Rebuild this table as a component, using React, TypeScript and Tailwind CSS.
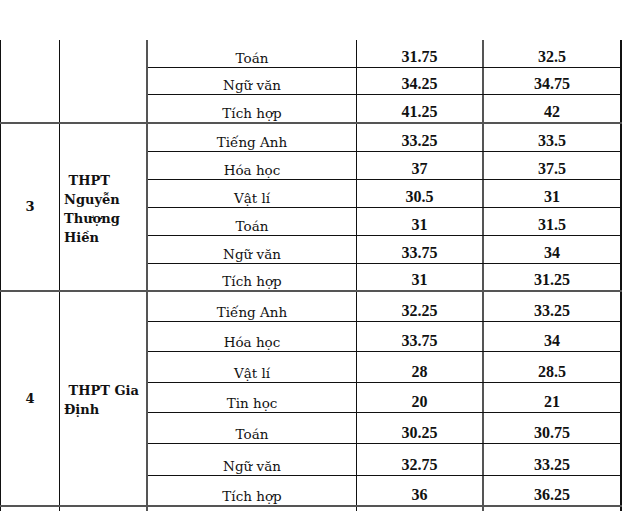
const groups = [
  {
    no: '',
    school: '',
    rows: [
      { subject: 'Toán', a: '31.75', b: '32.5', h: 28 },
      { subject: 'Ngữ văn', a: '34.25', b: '34.75', h: 27 },
      { subject: 'Tích hợp', a: '41.25', b: '42', h: 27 },
    ],
  },
  {
    no: '3',
    school: '\u00a0THPT Nguyễn Thượng Hiền',
    rows: [
      { subject: 'Tiếng Anh', a: '33.25', b: '33.5', h: 28 },
      { subject: 'Hóa học', a: '37', b: '37.5', h: 28 },
      { subject: 'Vật lí', a: '30.5', b: '31', h: 28 },
      { subject: 'Toán', a: '31', b: '31.5', h: 28 },
      { subject: 'Ngữ văn', a: '33.75', b: '34', h: 28 },
      { subject: 'Tích hợp', a: '31', b: '31.25', h: 26 },
    ],
  },
  {
    no: '4',
    school: '\u00a0THPT Gia Định',
    rows: [
      { subject: 'Tiếng Anh', a: '32.25', b: '33.25', h: 30 },
      { subject: 'Hóa học', a: '33.75', b: '34', h: 30 },
      { subject: 'Vật lí', a: '28', b: '28.5', h: 31 },
      { subject: 'Tin học', a: '20', b: '21', h: 30 },
      { subject: 'Toán', a: '30.25', b: '30.75', h: 31 },
      { subject: 'Ngữ văn', a: '32.75', b: '33.25', h: 32 },
      { subject: 'Tích hợp', a: '36', b: '36.25', h: 29 },
    ],
  },
  {
    no: '',
    school: '',
    rows: [{ subject: '', a: '', b: '', h: 30 }],
  },
];

const times = { fontFamily: '"Liberation Serif", "Times New Roman", serif' };
const cambria = { fontFamily: '"DejaVu Serif", Georgia, serif' };

export default function App() {
  return (
    <div className="h-[511px] w-[640px] overflow-hidden bg-white pt-[40px] text-[#111]" style={times}>
      <div className="w-[622px]">
        {groups.map((g, gi) => (
          <div key={gi} className="flex border-b-2 border-[#555]">
            <div
              className="flex w-[60px] shrink-0 items-center justify-center border-l border-r border-[#111] text-[13px] font-bold"
              style={cambria}
            >
              {g.no}
            </div>
            <div
              className="flex w-[88px] shrink-0 items-center border-r-2 border-[#555] pl-[4px] pr-[2px] text-[13px] font-bold leading-[19px]"
              style={cambria}
            >
              <span className="pt-[3px]">{g.school}</span>
            </div>
            <div className="flex flex-1 flex-col">
              {g.rows.map((r, ri) => (
                <div
                  key={ri}
                  className={`flex ${ri < g.rows.length - 1 ? 'border-b border-[#111]' : ''}`}
                  style={{ height: r.h }}
                >
                  <div
                    className="flex w-[209px] shrink-0 items-end justify-center border-r border-[#111] pb-[1px] text-[13.5px] leading-[16px]"
                    style={cambria}
                  >
                    {r.subject}
                  </div>
                  <div className="flex w-[127px] shrink-0 items-end justify-center border-r-2 border-[#555] pb-[2px] text-[16px] font-bold leading-[16px]">
                    {r.a}
                  </div>
                  <div className="flex w-[138px] shrink-0 items-end justify-center border-r-2 border-[#111] pb-[2px] text-[16px] font-bold leading-[16px]">
                    {r.b}
                  </div>
                </div>
              ))}
            </div>
          </div>
        ))}
      </div>
    </div>
  );
}
